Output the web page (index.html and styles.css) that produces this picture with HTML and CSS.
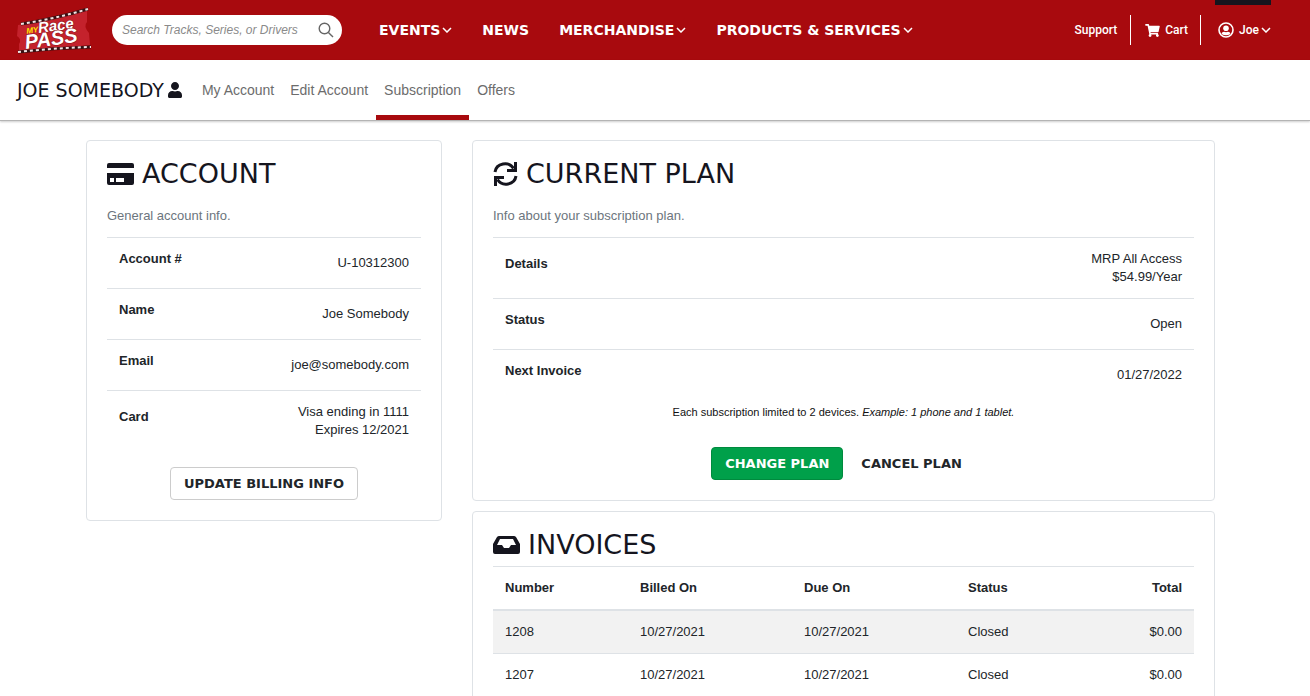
FILE: index.html
```html
<!DOCTYPE html>
<html lang="en">
  <head>
    <meta charset="UTF-8" />
    <meta name="viewport" content="width=device-width, initial-scale=1.0" />
    <title>Subscription - MyRacePass</title>
    <link rel="stylesheet" href="styles.css">
  </head>
  <body>
    <header class="topbar">
      <a href="#" class="logo" aria-label="MyRacePass">
        <svg width="76" height="48" viewBox="0 0 76 48">
          <path d="M2 19 Q30 15 52 7 L71 4 L71 16 Q67 20 73 27 L74 39 L3 46 L3 38 Q6 33 1 30Z" fill="#c4222c"></path>
          <path d="M5 18 Q38 13 72 3" fill="none" stroke="#3a1013" stroke-width="3"></path>
          <path d="M5 18 Q38 13 72 3" fill="none" stroke="#f3e4e4" stroke-width="2" stroke-dasharray="3 3"></path>
          <path d="M2 46 Q38 42 75 41" fill="none" stroke="#3a1013" stroke-width="3"></path>
          <path d="M2 46 Q38 42 75 41" fill="none" stroke="#f3e4e4" stroke-width="2" stroke-dasharray="3 3"></path>
          <g transform="rotate(-8 38 28)" font-family="Liberation Sans" font-weight="bold" font-style="italic">
            <text x="11" y="24" font-size="8" fill="#ffe600">MY</text>
            <text x="23" y="25" font-size="15" fill="#fff" stroke="#8a141b" stroke-width="1" paint-order="stroke">Race</text>
            <text x="8" y="39" font-size="20" fill="#fff" stroke="#8a141b" stroke-width="1" paint-order="stroke">PASS</text>
          </g>
        </svg>
      </a>
      <form class="search">
        <input type="text" aria-label="Search" placeholder="Search Tracks, Series, or Drivers" />
        <button type="submit" aria-label="Search">
          <svg width="16" height="16" viewBox="0 0 16 16" fill="none" stroke="#666" stroke-width="1.4">
            <circle cx="6.5" cy="6.5" r="5.3"></circle>
            <path d="M10.4 10.4 L15 15"></path>
          </svg>
        </button>
      </form>
      <nav class="main-nav">
        <a href="#">EVENTS<svg class="chev" viewBox="0 0 10 6"><path d="M1 1 L5 5 L9 1"></path></svg></a>
        <a href="#">NEWS</a>
        <a href="#">MERCHANDISE<svg class="chev" viewBox="0 0 10 6"><path d="M1 1 L5 5 L9 1"></path></svg></a>
        <a href="#">PRODUCTS &amp; SERVICES<svg class="chev" viewBox="0 0 10 6"><path d="M1 1 L5 5 L9 1"></path></svg></a>
      </nav>
      <nav class="user-nav">
        <a href="#">Support</a>
        <a href="#" class="cart">
          <svg width="15" height="13" viewBox="0 0 576 512" fill="#fff"><path d="M528 301l47-208c4-15-8-29-23-29H159l-9-45C148 8 138 0 126 0H24C11 0 0 11 0 24v16c0 13 11 24 24 24h70l70 343c-17 10-28 28-28 49 0 31 25 56 56 56s56-25 56-56c0-16-6-30-17-40h210c-11 10-17 24-17 40 0 31 25 56 56 56s56-25 56-56c0-22-13-41-32-50l6-25c3-15-8-29-24-29H218l-7-32h294c11 0 21-8 23-19z"></path></svg>
          Cart
        </a>
        <a href="#" class="user">
          <svg width="16" height="16" viewBox="0 0 16 16">
            <circle cx="8" cy="8" r="7" fill="none" stroke="#fff" stroke-width="1.6"></circle>
            <circle cx="8" cy="6.2" r="2.8" fill="#fff"></circle>
            <path d="M3.5 12 Q4 9.8 6 9.8 Q8 10.6 10 9.8 Q12 9.8 12.5 12 Q8 14.5 3.5 12Z" fill="#fff"></path>
          </svg>
          <span>Joe<svg class="chev" viewBox="0 0 10 6"><path d="M1 1 L5 5 L9 1"></path></svg></span>
        </a>
      </nav>
    </header>

    <div class="subbar">
      <h1>
        JOE SOMEBODY
        <svg width="14" height="16" viewBox="0 0 448 512"><path d="M224 256c71 0 128-57 128-128S295 0 224 0 96 57 96 128s57 128 128 128zm90 32h-17c-22 10-47 16-73 16s-51-6-73-16h-17C60 288 0 348 0 422v42c0 27 21 48 48 48h352c27 0 48-21 48-48v-42c0-74-60-134-134-134z"></path></svg>
      </h1>
      <nav class="sub-nav">
        <a href="#">My Account</a>
        <a href="#">Edit Account</a>
        <a href="#" class="active">Subscription</a>
        <a href="#">Offers</a>
      </nav>
    </div>

    <main class="content">
      <section class="card">
        <h2>
          <svg width="27" height="22" viewBox="0 0 27 22"><path fill-rule="evenodd" d="M2 0H25Q27 0 27 2V5H0V2Q0 0 2 0ZM0 10H27V20Q27 22 25 22H2Q0 22 0 20ZM3 15V19H7V15ZM9 15V19H17V15Z"></path></svg>
          ACCOUNT
        </h2>
        <p class="intro">General account info.</p>
        <table class="info">
          <tr><th scope="row">Account #</th><td>U-10312300</td></tr>
          <tr><th scope="row">Name</th><td>Joe Somebody</td></tr>
          <tr><th scope="row">Email</th><td>joe@somebody.com</td></tr>
          <tr class="tall"><th scope="row">Card</th><td>Visa ending in 1111<br />Expires 12/2021</td></tr>
        </table>
        <div class="actions">
          <button type="button" class="btn outline">UPDATE BILLING INFO</button>
        </div>
      </section>

      <div class="column">
        <section class="card">
          <h2>
            <svg width="25" height="24" viewBox="0 0 25 24">
              <g fill="none" stroke="#15151e" stroke-width="3">
                <path d="M2 10 A10 9.5 0 0 1 20.5 6.5"></path>
                <path d="M23 14 A10 9.5 0 0 1 4.5 17.5"></path>
                <path d="M22.5 0 V8.5 H14"></path>
                <path d="M2.5 24 V15.5 H11"></path>
              </g>
            </svg>
            CURRENT PLAN
          </h2>
          <p class="intro">Info about your subscription plan.</p>
          <table class="info">
            <tr class="tall"><th scope="row">Details</th><td>MRP All Access<br />$54.99/Year</td></tr>
            <tr><th scope="row">Status</th><td>Open</td></tr>
            <tr><th scope="row">Next Invoice</th><td>01/27/2022</td></tr>
          </table>
          <p class="note">Each subscription limited to 2 devices. <em>Example: 1 phone and 1 tablet.</em></p>
          <div class="actions plan">
            <button type="button" class="btn green">CHANGE PLAN</button>
            <button type="button" class="btn">CANCEL PLAN</button>
          </div>
        </section>

        <section class="card invoices">
          <h2>
            <svg width="27" height="18" viewBox="0 0 27 18"><path fill-rule="evenodd" d="M6 0H21Q22 0 23 1L27 8V16Q27 18 25 18H2Q0 18 0 16V8L4 1Q5 0 6 0ZM7 3L4 9H9L11 12H16L18 9H23L20 3Z"></path></svg>
            INVOICES
          </h2>
          <table class="list">
            <colgroup><col class="c-num" /><col class="c-date" /><col class="c-date" /><col class="c-date" /><col /></colgroup>
            <thead>
              <tr><th>Number</th><th>Billed On</th><th>Due On</th><th>Status</th><th>Total</th></tr>
            </thead>
            <tbody>
              <tr><td>1208</td><td>10/27/2021</td><td>10/27/2021</td><td>Closed</td><td>$0.00</td></tr>
              <tr><td>1207</td><td>10/27/2021</td><td>10/27/2021</td><td>Closed</td><td>$0.00</td></tr>
            </tbody>
          </table>
        </section>
      </div>
    </main>
  </body>
</html>
```
FILE: styles.css
```css
* {
  box-sizing: border-box;
}
html {
  overflow-x: hidden;
  scrollbar-width: none;
}
body {
  margin: 0;
  background: #fff;
  color: #212529;
  font: 13px/18px "Liberation Sans", Arial, sans-serif;
}
a {
  color: inherit;
  text-decoration: none;
}
svg {
  flex-shrink: 0;
}
h1,
h2 {
  margin: 0;
  display: flex;
  align-items: center;
  color: #15151e;
  fill: #15151e;
  font-family: "DejaVu Sans", sans-serif;
  font-weight: normal;
  white-space: nowrap;
}

/* top bar */
.topbar {
  height: 60px;
  padding: 0 39px 0 16px;
  display: flex;
  align-items: center;
  background: #a80a0e;
  color: #fff;
}
.logo {
  display: flex;
  margin-right: 20px;
}
.search {
  width: 230px;
  height: 30px;
  padding: 0 8px 0 10px;
  display: flex;
  align-items: center;
  border-radius: 15px;
  background: #fff;
}
.search input {
  flex: 1;
  min-width: 0;
  padding: 0;
  border: 0;
  outline: none;
  background: none;
  font: italic 12px/18px "Liberation Sans", Arial, sans-serif;
}
.search input::placeholder {
  color: #8a8a8a;
}
.search button {
  display: flex;
  padding: 0;
  border: 0;
  background: none;
}
.chev {
  width: 10px;
  height: 6px;
  margin-left: 2px;
  fill: none;
  stroke: #fff;
  stroke-width: 1.5;
}
.main-nav {
  display: flex;
  gap: 30px;
  margin-left: 37px;
  font: bold 14px/20px "DejaVu Sans", sans-serif;
}
.main-nav a {
  display: flex;
  align-items: center;
  white-space: nowrap;
}
.user-nav {
  display: flex;
  align-self: stretch;
  align-items: center;
  margin-left: auto;
  font-family: Roboto, sans-serif;
  font-size: 12px;
  font-weight: 500;
}
.user-nav a {
  display: flex;
  align-items: center;
}
.user-nav .cart {
  height: 30px;
  gap: 5px;
  margin: 0 14px 0 13px;
  padding: 0 12px 0 14px;
  border: 1px solid #fff;
  border-width: 0 1px;
}
.user-nav .user {
  height: 60px;
  gap: 5px;
  padding: 0 0 5px 3px;
  border-top: 5px solid #15151e;
}
.user span {
  display: flex;
  align-items: center;
}

/* account bar */
.subbar {
  height: 61px;
  padding-left: 17px;
  display: flex;
  align-items: stretch;
  gap: 12px;
  border-bottom: 1px solid #b4b4b4;
  box-shadow: 0 1px 2px rgba(0, 0, 0, 0.2);
}
.subbar h1 {
  gap: 4px;
  font-size: 19px;
}
.sub-nav {
  display: flex;
  color: #6c6c6c;
  font-size: 14px;
}
.sub-nav a {
  padding: 5px 8px 0;
  display: flex;
  align-items: center;
  border-bottom: 5px solid transparent;
}
.sub-nav .active {
  border-color: #a80a0e;
}

/* cards */
.content {
  padding: 19px 95px 19px 86px;
  display: grid;
  grid-template-columns: 356fr 743fr;
  gap: 30px;
  align-items: start;
}
.column {
  display: grid;
  gap: 10px;
}
.card {
  min-width: 0;
  padding: 20px;
  border: 1px solid #dee2e6;
  border-radius: 4px;
}
.card h2 {
  gap: 8px;
  font-size: 27px;
  line-height: 26px;
}
.intro {
  margin: 20px 0 12px;
  color: #6c757d;
}
table {
  width: 100%;
  border-collapse: separate;
  border-spacing: 0;
}
th,
td {
  padding: 12px;
  border-top: 1px solid #dee2e6;
  text-align: left;
}
.info th {
  vertical-align: top;
}
.info td {
  padding: 16px 12px;
  text-align: right;
}
.info .tall th {
  padding-top: 17px;
}
.info .tall td {
  padding: 12px;
}
.note {
  margin: 3px 0 26px;
  color: #111;
  font-size: 11px;
  text-align: center;
}
.actions {
  display: flex;
  justify-content: center;
  gap: 4px;
  margin-top: 16px;
}
.actions.plan {
  margin-top: 0;
}
.btn {
  height: 33px;
  padding: 0 13px;
  border: 1px solid transparent;
  border-radius: 4px;
  background: none;
  color: #212529;
  font: bold 13px/18px "DejaVu Sans", sans-serif;
  white-space: nowrap;
  cursor: pointer;
}
.btn.outline {
  border-color: #ccc;
}
.btn.green {
  border-color: #008a3e;
  background: #00a04a;
  color: #fff;
}

/* invoices */
.invoices h2 {
  margin-bottom: 8px;
}
.list {
  table-layout: fixed;
}
.c-num {
  width: 135px;
}
.c-date {
  width: 164px;
}
.list thead th {
  border-bottom: 2px solid #dee2e6;
}
.list tbody tr:first-child td {
  border-top: 0;
}
.list tbody tr:nth-child(odd) {
  background: #f2f2f2;
}
.list th:last-child,
.list td:last-child {
  text-align: right;
}
```
